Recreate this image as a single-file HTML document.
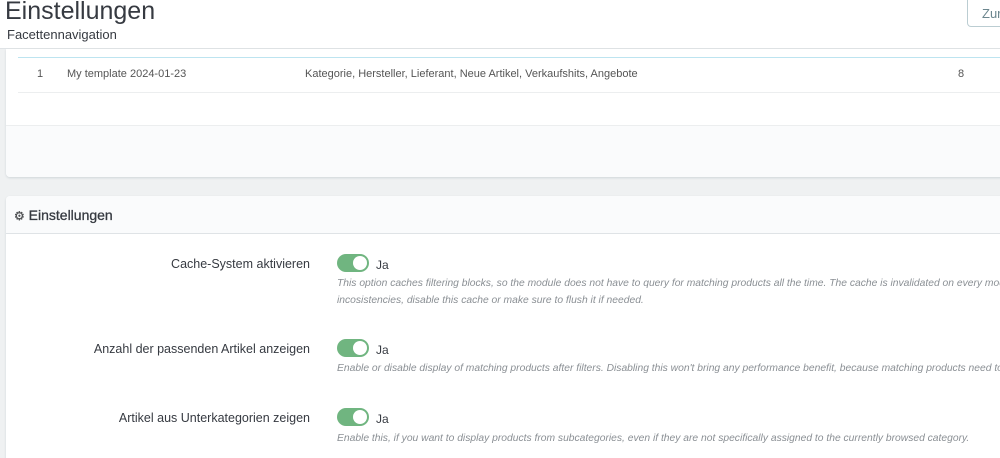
<!DOCTYPE html>
<html><head><style>
html,body{margin:0;width:1000px;height:458px;overflow:hidden}
body{background:#eff1f2;font-family:"Liberation Sans",sans-serif;position:relative;color:#363a41}
.hdr{position:absolute;left:0;top:0;width:1000px;height:48px;background:#fff;border-bottom:1px solid #dfe3e6}
.t1{position:absolute;left:5px;top:-3px;font-size:25px;color:#363a41}
.t2{position:absolute;left:7px;top:27px;font-size:13px;color:#363a41}
.btn{position:absolute;left:967px;top:0;width:60px;height:27px;border:1px solid #bbcdd2;border-top:none;border-radius:0 0 4px 4px;background:#fff;font-size:13px;color:#6c868e;padding:6px 0 0 14px;box-sizing:border-box}
.p1{position:absolute;left:6px;top:49px;width:1000px;height:128px;background:#fff;border-radius:0 0 4px 4px;box-shadow:0 1px 2px #d0d6d9;overflow:hidden}
.p1 .foot{position:absolute;left:0;top:76px;width:100%;height:52px;background:#fafbfc;border-top:1px solid #eceeef}
.l1{position:absolute;left:12px;top:8px;width:990px;border-top:1px solid #bde4f0}
.l2{position:absolute;left:12px;top:43px;width:990px;border-top:1px solid #eceeef}
.c{position:absolute;top:19px;font-size:11px;color:#555}
.p2{position:absolute;left:6px;top:196px;width:1000px;height:270px;background:#fff;border-radius:4px;box-shadow:0 1px 2px #d0d6d9;overflow:hidden}
.p2h{height:38px;background:#fafbfc;border-bottom:1px solid #dfe3e6;font-size:14px;padding:11px 0 0 8px;box-sizing:border-box;color:#363a41;-webkit-text-stroke:0.3px #363a41}
.lab{position:absolute;right:696px;font-size:12.5px;color:#363a41;text-align:right;white-space:nowrap}
.sw{position:absolute;left:331px;width:32px;height:18px;border-radius:9px;background:#70b580}
.sw:after{content:"";position:absolute;right:2px;top:2px;width:14px;height:14px;border-radius:50%;background:#fff}
.ja{position:absolute;left:370px;font-size:12px}
.hint{position:absolute;left:331px;font-size:10.3px;font-style:italic;color:#8a8f94;line-height:17px;white-space:nowrap}
</style></head><body>
<div class="hdr"><div class="t1">Einstellungen</div><div class="t2">Facettennavigation</div><div class="btn">Zur</div></div>
<div class="p1"><div class="l1"></div><div class="l2"></div>
<div class="c" style="left:31px">1</div><div class="c" style="left:61px">My template 2024-01-23</div>
<div class="c" style="left:299px">Kategorie, Hersteller, Lieferant, Neue Artikel, Verkaufshits, Angebote</div>
<div class="c" style="left:952px">8</div>
<div class="foot"></div></div>
<div class="p2"><div class="p2h"><span style="font-size:12px;color:#555">⚙</span> Einstellungen</div>
<div class="lab" style="top:61px">Cache-System aktivieren</div>
<div class="sw" style="top:58px"></div><div class="ja" style="top:62px">Ja</div>
<div class="hint" style="top:79px">This option caches filtering blocks, so the module does not have to query for matching products all the time. The cache is invalidated on every modification<br>incosistencies, disable this cache or make sure to flush it if needed.</div>
<div class="lab" style="top:146px">Anzahl der passenden Artikel anzeigen</div>
<div class="sw" style="top:143px"></div><div class="ja" style="top:147px">Ja</div>
<div class="hint" style="top:164px">Enable or disable display of matching products after filters. Disabling this won't bring any performance benefit, because matching products need to be calculated anyway.</div>
<div class="lab" style="top:215px">Artikel aus Unterkategorien zeigen</div>
<div class="sw" style="top:212px"></div><div class="ja" style="top:216px">Ja</div>
<div class="hint" style="top:234px">Enable this, if you want to display products from subcategories, even if they are not specifically assigned to the currently browsed category.</div>
</div>
</body></html>
